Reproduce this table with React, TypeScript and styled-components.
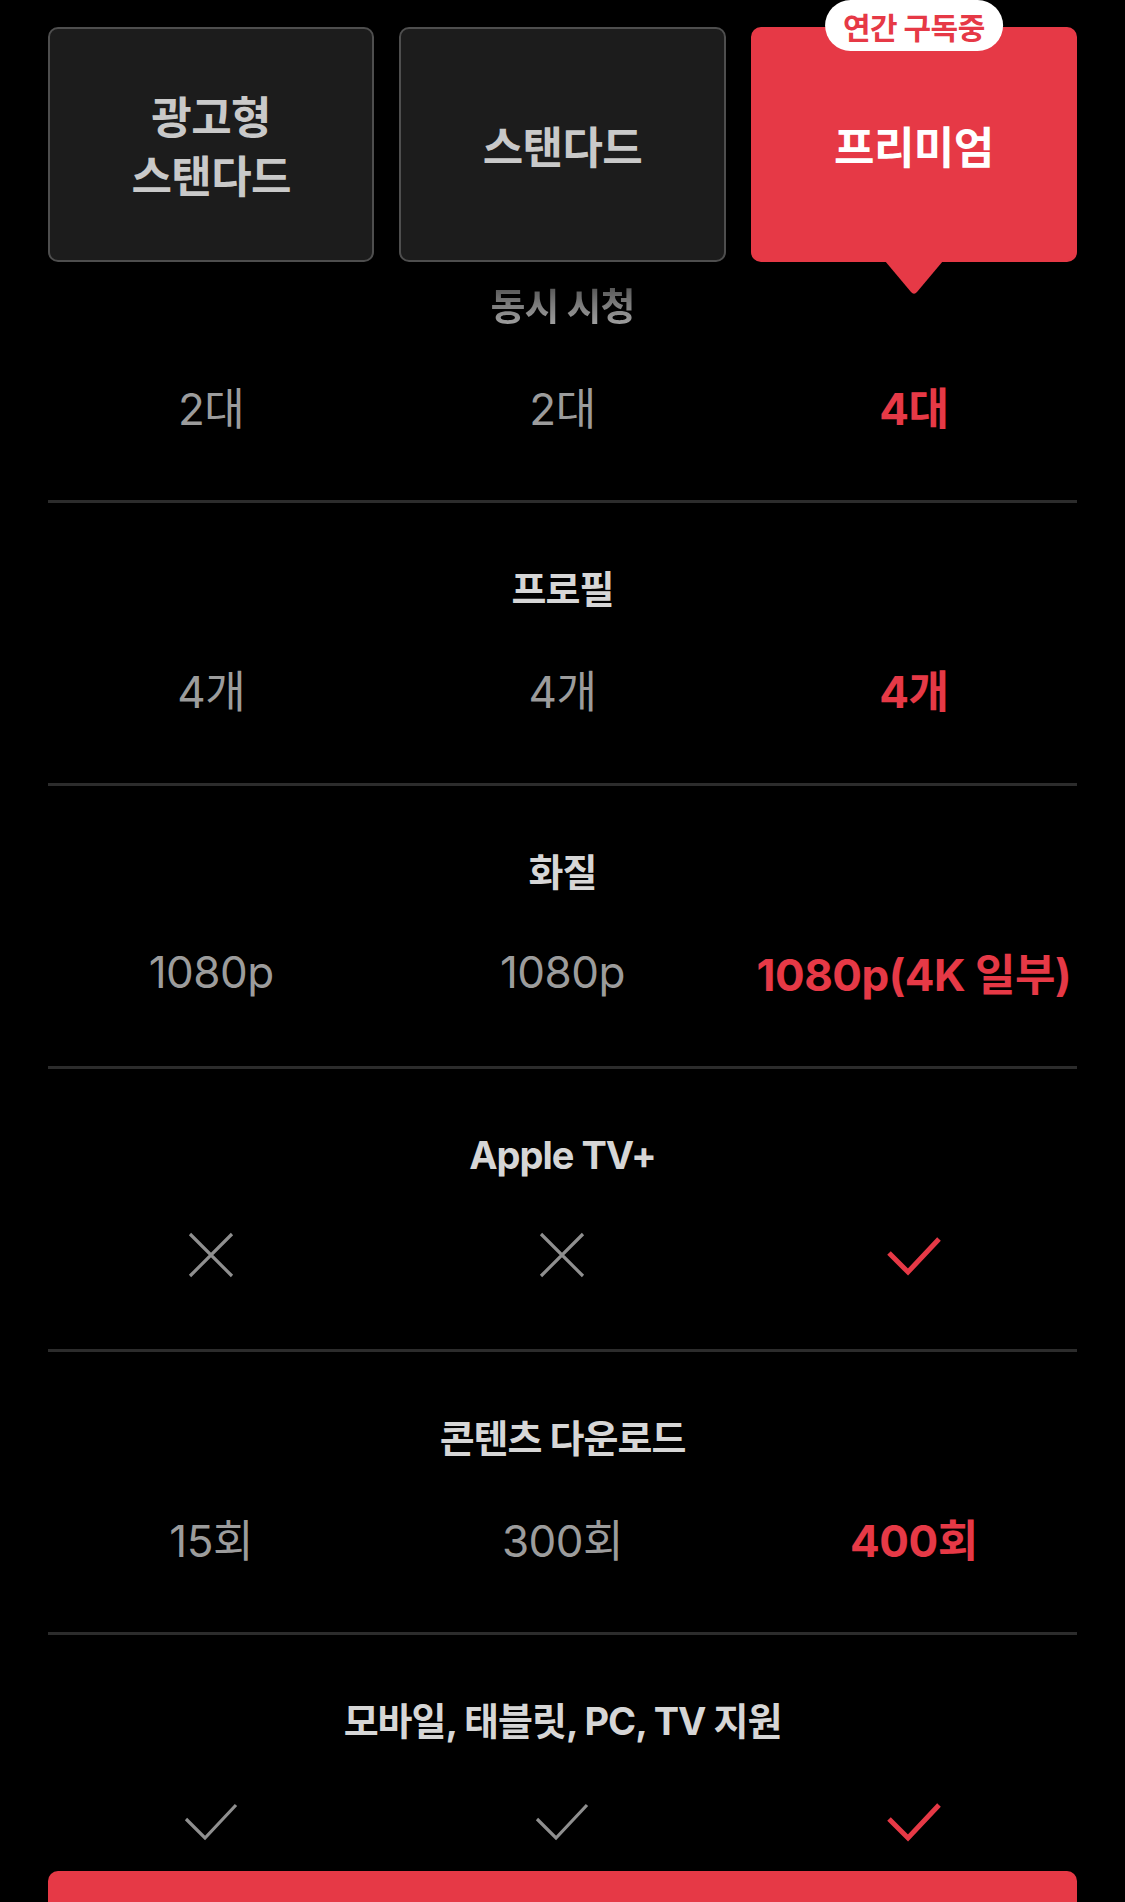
import React from "react";
import styled, { createGlobalStyle, css } from "styled-components";

const RED = "#e63946";

const GlobalStyle = createGlobalStyle`
  html, body {
    margin: 0;
    padding: 0;
    background: #000;
  }
  body {
    font-family: Inter, "Noto Sans CJK KR", sans-serif;
    -webkit-font-smoothing: antialiased;
  }
  * {
    box-sizing: border-box;
  }
`;

type Cell = { kind: "text"; value: string } | { kind: "check" } | { kind: "cross" };

type Row = { title: string; cells: Cell[] };

const plans = [
  { name: ["광고형", "스탠다드"] },
  { name: ["스탠다드"] },
  { name: ["프리미엄"], badge: "연간 구독중" },
];

const selected = 2;

const t = (value: string): Cell => ({ kind: "text", value });
const check: Cell = { kind: "check" };
const cross: Cell = { kind: "cross" };

const rows: Row[] = [
  { title: "동시 시청", cells: [t("2대"), t("2대"), t("4대")] },
  { title: "프로필", cells: [t("4개"), t("4개"), t("4개")] },
  { title: "화질", cells: [t("1080p"), t("1080p"), t("1080p(4K 일부)")] },
  { title: "Apple TV+", cells: [cross, cross, check] },
  { title: "콘텐츠 다운로드", cells: [t("15회"), t("300회"), t("400회")] },
  { title: "모바일, 태블릿, PC, TV 지원", cells: [check, check, check] },
];

const Check: React.FC<{ active: boolean }> = ({ active }) => (
  <svg width="56" height="42" viewBox="0 0 56 42">
    <polyline
      points="3,19 22,38 53,5"
      fill="none"
      stroke={active ? RED : "#8f8f8f"}
      strokeWidth={active ? 5 : 3.2}
      strokeLinejoin="miter"
    />
  </svg>
);

const Cross: React.FC = () => (
  <svg width="46" height="46" viewBox="0 0 46 46">
    <path d="M2 2 L44 44 M44 2 L2 44" stroke="#8f8f8f" strokeWidth="3.2" fill="none" />
  </svg>
);

const App: React.FC = () => {
  return (
    <>
      <GlobalStyle />
      <Page>
        <PlanGrid>
          {plans.map((plan, i) => (
            <PlanCard key={i} $active={i === selected}>
              {plan.badge && <Badge>{plan.badge}</Badge>}
              <PlanName $active={i === selected}>
                {plan.name.map((line) => (
                  <NameLine key={line}>{line}</NameLine>
                ))}
              </PlanName>
              {i === selected && (
                <Pointer width="58" height="34" viewBox="0 0 58 34">
                  <path d="M0 0 L58 0 L32 31 Q29 34.5 26 31 Z" fill={RED} />
                </Pointer>
              )}
            </PlanCard>
          ))}
        </PlanGrid>

        {rows.map((row, r) => (
          <Section key={row.title} $first={r === 0} $last={r === rows.length - 1}>
            <SectionTitle $faded={r === 0}>{row.title}</SectionTitle>
            <ValueGrid>
              {row.cells.map((cell, i) => (
                <ValueCell key={i} $active={i === selected}>
                  {cell.kind === "text" && cell.value}
                  {cell.kind === "check" && <Check active={i === selected} />}
                  {cell.kind === "cross" && <Cross />}
                </ValueCell>
              ))}
            </ValueGrid>
          </Section>
        ))}

        <SubmitButton type="button" aria-label="프리미엄 선택" />
      </Page>
    </>
  );
};

const Page = styled.div`
  width: 1125px;
  padding: 27px 48px 0;
  background: #000;
`;

const PlanGrid = styled.div`
  display: grid;
  grid-template-columns: repeat(3, 1fr);
  gap: 25px;
`;

const PlanCard = styled.div<{ $active: boolean }>`
  position: relative;
  height: 235px;
  display: flex;
  align-items: center;
  justify-content: center;
  border-radius: 10px;
  ${({ $active }) =>
    $active
      ? css`
          background: ${RED};
          border: 2px solid ${RED};
        `
      : css`
          background: #1c1c1c;
          border: 2px solid #4e4e4e;
        `}
`;

const PlanName = styled.div<{ $active: boolean }>`
  display: flex;
  flex-direction: column;
  align-items: center;
  gap: 7px;
  font-family: "Noto Sans CJK KR", sans-serif;
  font-size: 44px;
  font-weight: 700;
  letter-spacing: -0.6px;
  color: ${({ $active }) => ($active ? "#ffffff" : "#c9c9c9")};
`;

const NameLine = styled.span`
  display: block;
  height: 52px;
  line-height: 52px;
`;

const Badge = styled.div`
  position: absolute;
  top: -29px;
  left: 50%;
  transform: translateX(-50%);
  height: 51px;
  padding: 0 18px;
  display: flex;
  align-items: center;
  border-radius: 26px;
  background: #fff;
  color: ${RED};
  font-family: "Noto Sans CJK KR", sans-serif;
  font-size: 30px;
  font-weight: 700;
  letter-spacing: -0.5px;
  white-space: nowrap;
`;

const Pointer = styled.svg`
  position: absolute;
  left: 50%;
  bottom: -35px;
  transform: translateX(-50%);
  display: block;
`;

const Section = styled.div<{ $first: boolean; $last: boolean }>`
  display: flex;
  flex-direction: column;
  align-items: center;
  padding-top: ${({ $first }) => ($first ? "20px" : "62px")};
  padding-bottom: ${({ $last }) => ($last ? "20px" : "64px")};
  border-bottom: ${({ $last }) => ($last ? "none" : "3px solid #2c2c2c")};
`;

const SectionTitle = styled.div<{ $faded: boolean }>`
  height: 48px;
  line-height: 48px;
  font-size: 38px;
  font-weight: 700;
  letter-spacing: -1px;
  color: #d6d6d6;
  white-space: nowrap;
  ${({ $faded }) =>
    $faded &&
    css`
      background: linear-gradient(180deg, #4a4a4a 0%, #7a7a7a 45%, #a8a8a8 100%);
      -webkit-background-clip: text;
      background-clip: text;
      color: transparent;
    `}
`;

const ValueGrid = styled.div`
  width: 100%;
  margin-top: 46px;
  display: grid;
  grid-template-columns: repeat(3, 1fr);
  gap: 25px;
`;

const ValueCell = styled.div<{ $active: boolean }>`
  height: 60px;
  display: flex;
  align-items: center;
  justify-content: center;
  white-space: nowrap;
  font-size: 44px;
  letter-spacing: -0.5px;
  font-weight: ${({ $active }) => ($active ? 700 : 400)};
  color: ${({ $active }) => ($active ? RED : "#9c9c9c")};
`;

const SubmitButton = styled.button`
  display: block;
  width: 100%;
  height: 130px;
  border: none;
  border-radius: 10px;
  background: ${RED};
`;

export default App;
